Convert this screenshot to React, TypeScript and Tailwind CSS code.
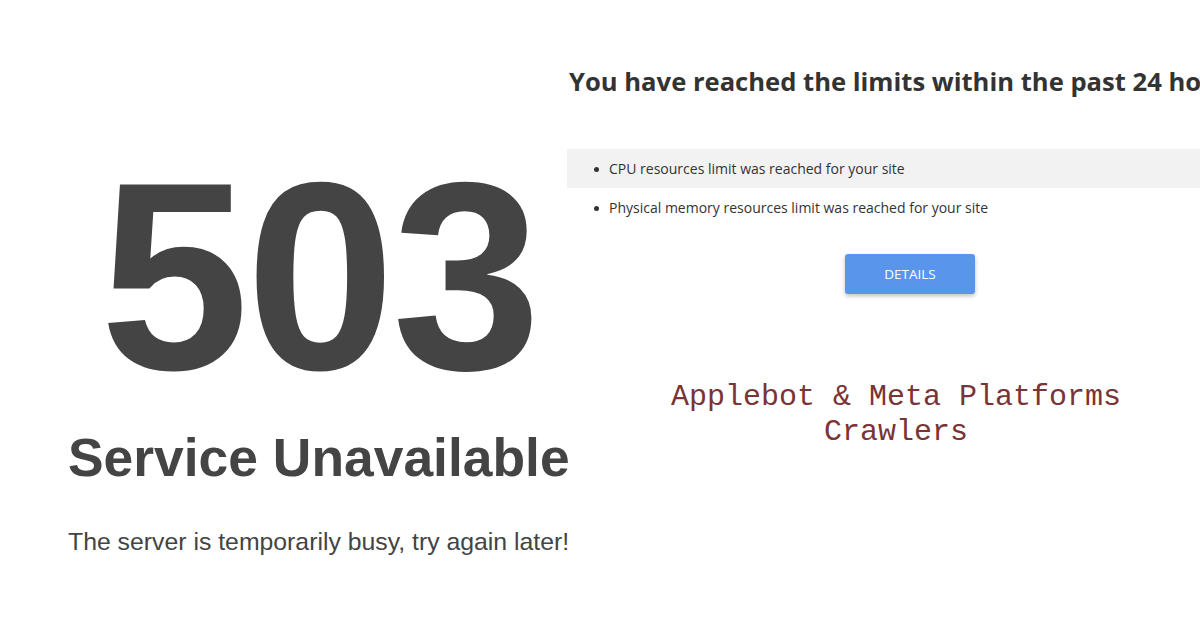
export default function App() {
  const limits = [
    "CPU resources limit was reached for your site",
    "Physical memory resources limit was reached for your site",
  ];

  return (
    <div className="w-[1200px] h-[628px] bg-white flex overflow-hidden">
      {/* Left: big error code */}
      <div className="w-[567px] shrink-0 pl-[68px] pt-[142px] font-['Liberation_Sans',Arial,sans-serif] text-[#444444]">
        <div className="w-[502px] text-center text-[268px] font-bold leading-none tracking-[-3px]">
          503
        </div>
        <h1 className="mt-[21px] text-[53.4px] font-bold leading-none whitespace-nowrap">
          Service Unavailable
        </h1>
        <p className="mt-[46px] text-[24.8px] leading-none whitespace-nowrap">
          The server is temporarily busy, try again later!
        </p>
      </div>

      {/* Right: hosting limits notice */}
      <div className="flex-1 min-w-0 overflow-hidden pt-[62px] font-['Open_Sans',sans-serif] text-[#333333]">
        <h2 className="pl-[2px] text-[25.6px] font-bold leading-[40px] whitespace-nowrap">
          You have reached the limits within the past 24 hours
        </h2>
        <div className="w-[686px] mt-[47px] flex flex-col items-center">
          <ul className="w-full">
            {limits.map((item, i) => (
              <li
                key={item}
                className={`h-[39px] flex items-center pl-[27px] text-[14px] ${
                  i === 0 ? "bg-[#f2f2f2]" : "bg-white"
                }`}
              >
                <span className="w-[5px] h-[5px] rounded-full bg-[#333333] mr-[10px] mt-[1px]" />
                <span>{item}</span>
              </li>
            ))}
          </ul>
          <button className="mt-[27px] w-[130px] h-[40px] rounded-[3px] bg-[#5895eb] text-white text-[13.5px] font-medium shadow-[0_2px_4px_rgba(0,0,0,0.25)]">
            DETAILS
          </button>
        </div>
        <div className="w-[658px] mt-[86px] text-center font-['Liberation_Mono','Courier_New',monospace] text-[30px] leading-[35px] text-[#7a3434]">
          Applebot &amp; Meta Platforms
          <br />
          Crawlers
        </div>
      </div>
    </div>
  );
}
